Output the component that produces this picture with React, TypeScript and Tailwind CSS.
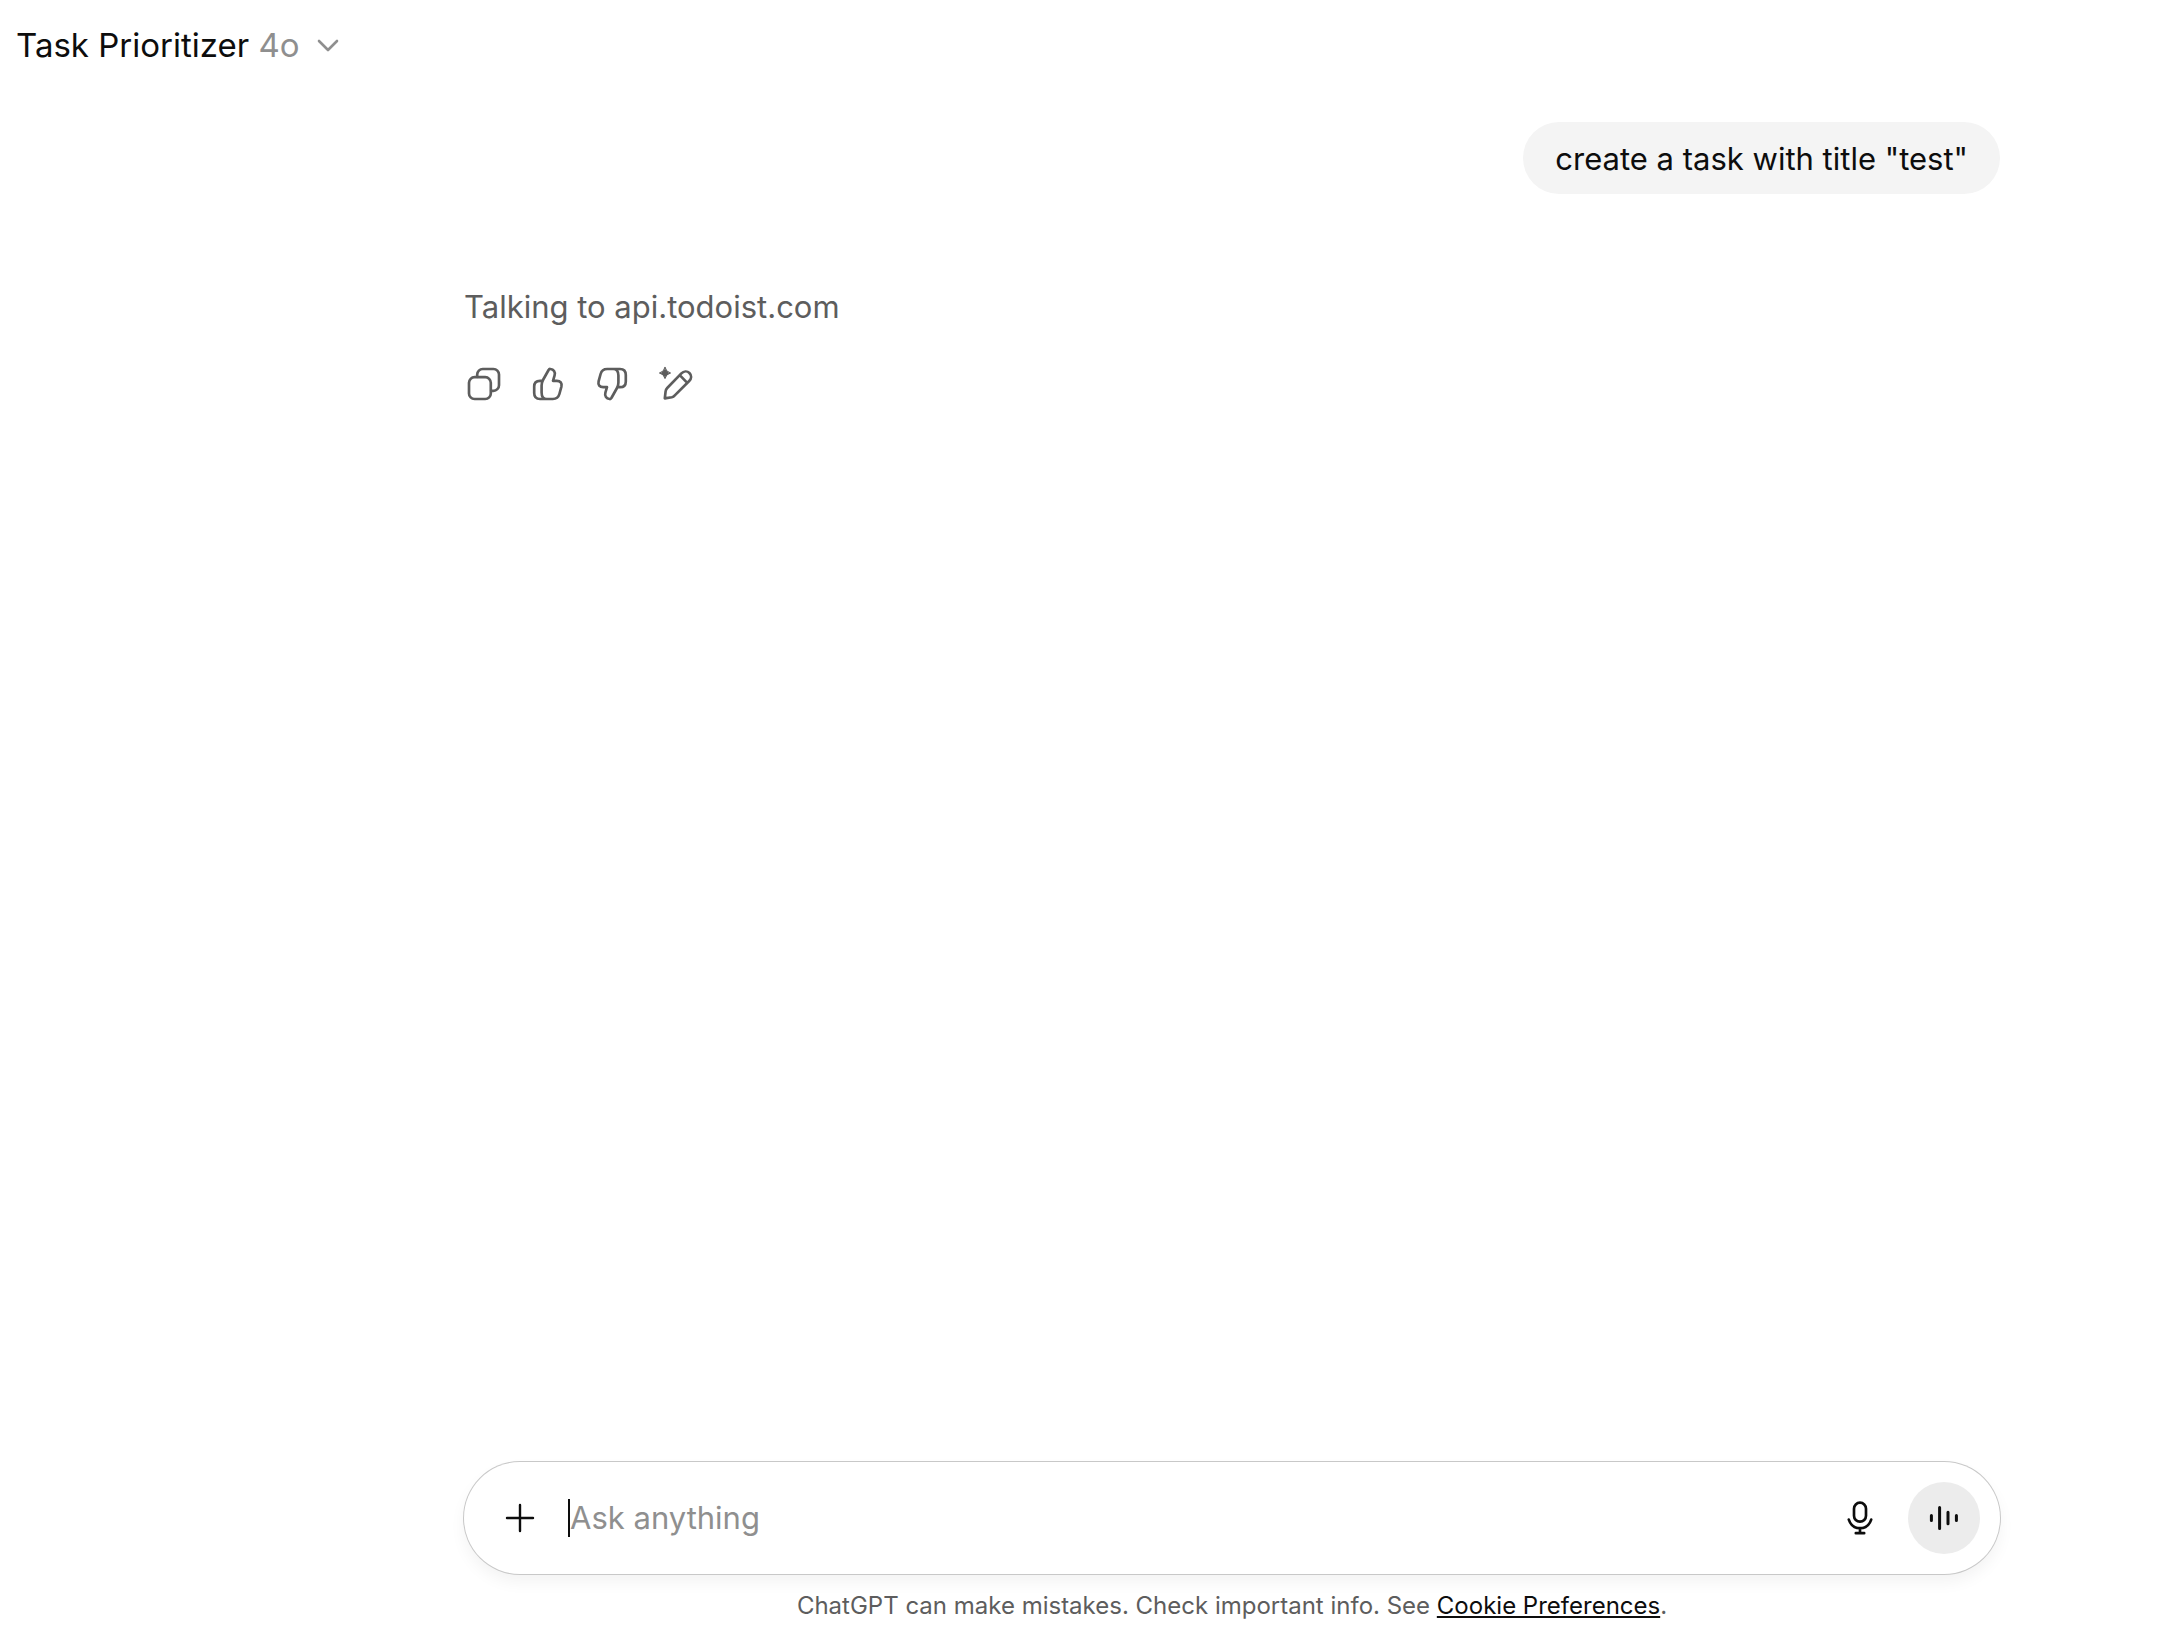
import React from "react";

type IconProps = { children: React.ReactNode; className?: string; width?: number };

function Icon({ children, className = "", width = 1.33 }: IconProps) {
  return (
    <svg
      viewBox="0 0 20 20"
      className={`size-10 shrink-0 ${className}`}
      fill="none"
      stroke="currentColor"
      strokeWidth={width}
      strokeLinecap="round"
      strokeLinejoin="round"
      aria-hidden="true"
    >
      {children}
    </svg>
  );
}

const thumb = (
  <path d="M7.3 8.4H6C4.2 8.4 3.1 9.5 3.1 11.3V14.5C3.1 16.4 4.2 17.5 6 17.5H12.4C14.3 17.5 15.2 16.8 15.7 15L16.7 11.3C17.1 9.6 16.2 8.4 14.4 8.4H12.5L13.3 5.7C13.8 4 12.8 2.7 11.2 2.5C10.8 2.4 10.5 2.6 10.3 3L7.5 8C7 8.9 6.8 9.6 6.8 10.8V14.2C6.8 16.3 7.6 17.5 9.4 17.5" />
);

const actions = [
  {
    label: "Copy",
    icon: (
      <Icon>
        <rect x="2.5" y="6.6" width="10.9" height="10.9" rx="2.8" />
        <path d="M6.6 6.4V5.3A2.8 2.8 0 0 1 9.4 2.5H14.7A2.8 2.8 0 0 1 17.5 5.3V10.6A2.8 2.8 0 0 1 14.7 13.4H13.6" />
      </Icon>
    ),
  },
  { label: "Good response", icon: <Icon>{thumb}</Icon> },
  { label: "Bad response", icon: <Icon className="rotate-180">{thumb}</Icon> },
  {
    label: "Edit in canvas",
    icon: (
      <Icon>
        <path d="M4.4 17.2L4.8 13.7Q4.9 12.7 5.6 12L12.7 4.7C13.9 3.5 15.6 3.4 16.7 4.5C17.9 5.7 17.8 7.3 16.6 8.5L9.4 15.7Q8.8 16.4 7.9 16.6ZM12 5.7L15.5 9.3" />
        <path
          d="M4.5 1.7Q5 4 7.3 4.5Q5 5 4.5 7.3Q4 5 1.7 4.5Q4 4 4.5 1.7Z"
          fill="currentColor"
          strokeWidth="0.5"
        />
      </Icon>
    ),
  },
];

export default function App() {
  return (
    <div className="flex min-h-screen flex-col bg-white font-[Inter,sans-serif] text-[#0d0d0d]">
      <header className="flex h-[90px] items-center px-4">
        <button className="flex items-center gap-3 text-[33px] leading-10">
          <span>
            Task Prioritizer <span className="text-[#8f8f8f]">4o</span>
          </span>
          <svg
            viewBox="0 0 32 32"
            className="size-8 text-[#8f8f8f]"
            fill="none"
            stroke="currentColor"
            strokeWidth="2.6"
            strokeLinecap="round"
            strokeLinejoin="round"
            aria-hidden="true"
          >
            <path d="M7 12L16 21L25 12" />
          </svg>
        </button>
      </header>

      <div className="flex flex-1 flex-col pr-[180px]">
        <main className="ml-auto w-full max-w-[1536px] flex-1 pt-8">
          <div className="flex justify-end">
            <p className="rounded-full bg-[#f4f4f4] px-8 pt-[13px] pb-[11px] text-[31px] leading-[48px]">
              create a task with title "test"
            </p>
          </div>
          <p className="mt-[89px] text-[31px] leading-[48px] text-[#5d5d5d]">
            Talking to api.todoist.com
          </p>
          <div className="mt-[33px] flex gap-6 text-[#5d5d5d]">
            {actions.map((a) => (
              <button key={a.label} aria-label={a.label}>
                {a.icon}
              </button>
            ))}
          </div>
        </main>

        <footer className="ml-auto w-full max-w-[1536px]">
          <form
            className="flex h-28 items-center rounded-full bg-white pr-5 pl-9 shadow-[0_0_0_1px_#c8c8c8,0_8px_16px_rgba(0,0,0,0.05)]"
            onSubmit={(e) => e.preventDefault()}
          >
            <button type="button" aria-label="Add photos and files">
              <Icon width={1.2}>
                <path d="M10 3.5V16.5M3.5 10H16.5" />
              </Icon>
            </button>
            <span className="ml-7 h-[38px] w-0.5 bg-[#0d0d0d]" aria-hidden="true" />
            <input
              type="text"
              aria-label="Message"
              placeholder="Ask anything"
              className="min-w-0 flex-1 bg-transparent text-[31px] leading-[48px] outline-none placeholder:text-[#8f8f8f]"
            />
            <button type="button" aria-label="Dictate" className="mr-7">
              <Icon>
                <rect x="7" y="2.35" width="6" height="9.5" rx="3" />
                <path d="M4.4 10.8C5.3 13.5 7.4 15.1 10 15.1C12.6 15.1 14.7 13.5 15.6 10.8M10 15.1V17.5M7.9 17.6H12.1" />
              </Icon>
            </button>
            <button
              type="button"
              aria-label="Use voice mode"
              className="flex size-[72px] items-center justify-center rounded-full bg-[#ececec]"
            >
              <Icon width={1.5}>
                <path d="M3.7 8.8V11.2M7.8 4.7V15.3M12 7.1V12.9M16.2 8.8V11.2" />
              </Icon>
            </button>
          </form>
          <p className="pt-4 pb-1.5 text-center text-2xl leading-8 text-[#5d5d5d]">
            ChatGPT can make mistakes. Check important info. See{" "}
            <a
              href="#cookies"
              className="text-[#0d0d0d] underline decoration-2 underline-offset-2"
            >
              Cookie Preferences
            </a>
            .
          </p>
        </footer>
      </div>
    </div>
  );
}
